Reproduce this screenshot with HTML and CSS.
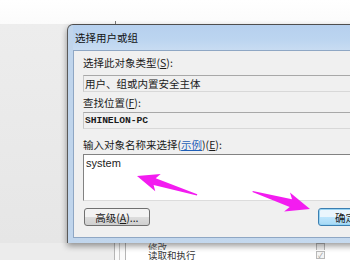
FILE: index.html
```html
<!DOCTYPE html>
<html>
    <head>
        <meta charset="utf-8">
        <title>选择用户或组</title>
        <link rel="stylesheet" href="styles.css">
    </head>
    <body>
        <div class="screen">
            <div class="top"><span class="mark"></span></div>

            <div class="stage">
                <div class="gap"></div>
                <div class="dialog">
                    <div class="titlebar">选择用户或组</div>
                    <div class="client">
                        <div class="label">选择此对象类型(<u>S</u>):</div>
                        <div class="field">用户、组或内置安全主体</div>
                        <div class="label tight">查找位置(<u>F</u>):</div>
                        <div class="field mono">SHINELON-PC</div>
                        <div class="label tight">输入对象名称来选择(<a class="link">示例</a>)(<u>E</u>):</div>
                        <div class="names">system</div>
                        <div class="buttons">
                            <button class="btn">高级(<u>A</u>)...</button>
                            <button class="btn default">确定</button>
                        </div>
                    </div>
                </div>
            </div>

            <!-- window behind the dialog -->
            <div class="behind">
                <div class="bgap"></div>
                <div class="rails"></div>
                <div class="list">
                    <div class="row dim"><span>修改</span><span class="check"></span></div>
                    <div class="row"><span>读取和执行</span><span class="check on">✓</span></div>
                </div>
            </div>
        </div>

        <svg class="arrows" width="350" height="260" viewBox="0 0 350 260">
            <polygon fill="#f31cf0" transform="translate(137,176) rotate(17.5)"
                     points="0,0 22,-9 18.5,-3.5 63,-0.6 63,0.6 18.5,3.5 22,9"/>
            <polygon fill="#f31cf0" transform="translate(310,209) rotate(197)"
                     points="0,0 24,-10 20,-4 60,-0.6 60,0.6 20,4 24,10"/>
        </svg>
    </body>
</html>
```

FILE: styles.css
```css
body {
    margin: 0;
    width: 350px;
    height: 260px;
    overflow: hidden;
    position: relative;
    background: #ececec;
    font-family: "Noto Sans CJK SC", "Liberation Sans", sans-serif;
    font-size: 10.5px;
    color: #1a1a1a;
}
u {
    text-decoration: underline;
}
.screen {
    width: 350px;
    height: 260px;
    overflow: hidden;
}
.top {
    height: 24px;
    background: linear-gradient(#ffffff, #fbfbfb);
    display: flex;
}
.mark {
    margin: 21px 0 0 115px;
    width: 1px;
    height: 3px;
    background: #7a7a7a;
}
.stage {
    display: flex;
    background: linear-gradient(#ededed, #e6e6e6);
}
.gap {
    width: 67px;
    flex-shrink: 0;
}
.dialog {
    position: relative;
    z-index: 1;
    flex-shrink: 0;
    width: 300px;
    border-top: 1px solid #4e4e4e;
    border-left: 1px solid #5a5a5a;
    border-radius: 6px 0 0 0;
    background: linear-gradient(90deg, #c0d5ec, #c6daef);
    padding: 0 0 5px 5px;
    box-shadow: 0 3px 6px rgba(0, 0, 0, 0.4);
}
.titlebar {
    height: 25px;
    line-height: 25px;
    padding-left: 2px;
    background: linear-gradient(#b6d0ee, #bcd5f0 60%, #c8dcf2);
    color: #111;
}
.client {
    box-sizing: border-box;
    height: 188px;
    background: #f0f0f0;
    border: 1px solid #8fa7c4;
    border-right: none;
    padding: 5px 0 0 9px;
}
.label {
    height: 14px;
    line-height: 14px;
    margin-bottom: 5px;
}
.label.tight {
    margin-bottom: 2px;
}
.field {
    height: 15px;
    line-height: 15px;
    border-top: 1px solid #a8a8a8;
    border-bottom: 1px solid #d8d8d8;
    border-left: 1px solid #c8c8c8;
    padding-left: 1px;
    margin-bottom: 4px;
}
.field.mono {
    font-family: "Liberation Mono", monospace;
    font-size: 9.7px;
    font-weight: 700;
    letter-spacing: -0.1px;
    margin-bottom: 9px;
}
.link {
    color: #1f5fb8;
    text-decoration: underline;
}
.names {
    height: 45px;
    background: #fff;
    border: 1px solid #828282;
    border-right-color: #dcdcdc;
    border-bottom-color: #dcdcdc;
    padding-left: 2px;
    font-family: "Liberation Sans", sans-serif;
    font-size: 11px;
    line-height: 16px;
    color: #222;
}
.buttons {
    display: flex;
    gap: 168px;
    margin-top: 7px;
    padding-left: 1px;
}
.btn {
    width: 74px;
    height: 18px;
    padding: 0;
    border: 1px solid #707070;
    border-radius: 3px;
    background: linear-gradient(#f3f3f3 50%, #dddddd 50%, #cfcfcf);
    font-family: "Noto Sans CJK SC", sans-serif;
    font-size: 10.5px;
    color: #1a1a1a;
}
.btn.default {
    width: 62px;
    border-color: #3c7fb1;
    background: linear-gradient(#eaf6fd 50%, #bee6fd 50%, #a7d9f5);
    box-shadow: inset 0 0 0 1px #97d3f3;
}
.behind {
    display: flex;
    height: 17px;
    background: #ececec;
}
.bgap {
    width: 114px;
}
.rails {
    width: 10px;
    border-left: 1px solid #b5b5b5;
    border-right: 1px solid #b5b5b5;
    background: linear-gradient(90deg, #fafafa 45%, #c9c9c9 45%, #c9c9c9 55%, #fafafa 55%);
}
.list {
    flex: 1;
    background: #ffffff;
    padding-left: 22px;
}
.row {
    display: grid;
    grid-template-columns: 168px 9px;
    align-items: center;
    height: 10px;
    line-height: 10px;
    font-size: 9.5px;
    overflow: hidden;
    color: #333;
}
.row.dim {
    height: 7px;
    line-height: 4px;
    color: #555;
}
.check {
    height: 6px;
    border: 1px solid #b8b8b8;
    background: #f4f4f4;
    font-size: 7px;
    line-height: 6px;
    text-align: center;
    color: #9a9a9a;
}
.arrows {
    position: absolute;
    z-index: 2;
    left: 0;
    top: 0;
    pointer-events: none;
}
```
